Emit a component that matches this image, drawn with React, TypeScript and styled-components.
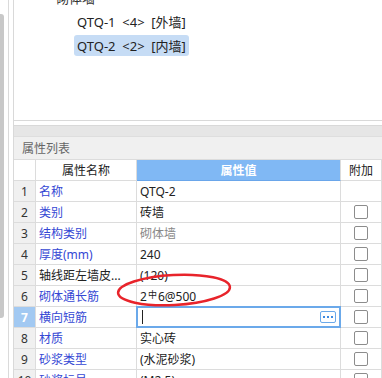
import React from 'react';
import styled, { createGlobalStyle } from 'styled-components';

const GlobalStyle = createGlobalStyle`
  html, body {
    margin: 0;
    padding: 0;
    background: #ffffff;
    overflow: hidden;
  }
  body {
    font-family: "Noto Sans", "Noto Sans CJK SC", sans-serif;
    color: #222;
  }
`;

const Page = styled.div`
  position: relative;
  display: flex;
  width: 382px;
  height: 378px;
  overflow: hidden;
  background: #fff;
`;

const ScrollTrack = styled.div`
  width: 8px;
  border-right: 1px solid #dadada;
  margin-right: 4px;
  padding-top: 14px;
  flex-shrink: 0;
`;

const ScrollThumb = styled.div`
  width: 4px;
  height: 304px;
  background: #c8c8c8;
  border-radius: 0 3px 3px 0;
`;

const Main = styled.div`
  flex: 1;
  display: flex;
  flex-direction: column;
  border-left: 1px solid #d9d9d9;
  min-width: 0;
`;

const TreePanel = styled.div`
  flex-shrink: 0;
  height: 121px;
  box-sizing: border-box;
  border-bottom: 1px solid #d9d9d9;
  overflow: hidden;
  font-size: 13px;
`;

const TreeList = styled.div`
  display: flex;
  flex-direction: column;
  margin-top: -13px;
  gap: 3px;
`;

const TreeRoot = styled.div`
  display: flex;
  align-items: center;
  height: 21px;
  padding-left: 34px;
  color: #333;
  gap: 5px;
`;

const Dot = styled.span`
  width: 3px;
  height: 3px;
  background: #888;
  border-radius: 50%;
`;

const TreeItem = styled.div<{ $selected?: boolean }>`
  align-self: flex-start;
  display: flex;
  align-items: center;
  height: 21px;
  margin-left: 60px;
  padding: 0 3px;
  border-radius: 3px;
  color: #222;
  white-space: pre;
  background: ${(p) => (p.$selected ? '#c6dcf5' : 'transparent')};
`;

const Gap = styled.div`
  flex-shrink: 0;
  height: 4px;
`;

const PropPanel = styled.div`
  flex-shrink: 0;
  display: flex;
  flex-direction: column;
  border-top: 1px solid #d9d9d9;
`;

const PanelBar = styled.div`
  flex-shrink: 0;
  height: 10px;
  background: #e6e6e6;
  border-bottom: 1px solid #dedede;
`;

const PanelTitle = styled.div`
  flex-shrink: 0;
  height: 22px;
  display: flex;
  align-items: center;
  padding-left: 8px;
  background: #f0f0f0;
  color: #666;
  font-size: 12px;
`;

const Grid = styled.div`
  flex-shrink: 0;
  border-top: 1px solid #dcdcdc;
  font-size: 12px;
`;

const Row = styled.div`
  display: grid;
  grid-template-columns: 22px 101px 204px 41px;
  height: 21px;
`;

const Cell = styled.div<{ $align?: string; $color?: string; $bg?: string }>`
  position: relative;
  box-sizing: border-box;
  display: flex;
  align-items: center;
  justify-content: ${(p) => p.$align || 'flex-start'};
  padding-left: ${(p) => (p.$align ? '0' : '3px')};
  border-right: 1px solid #dcdcdc;
  border-bottom: 1px solid #dcdcdc;
  background: ${(p) => p.$bg || '#fff'};
  color: ${(p) => p.$color || '#222'};
  white-space: nowrap;
  overflow: hidden;
`;

const NumCell = styled(Cell)<{ $active?: boolean }>`
  background: ${(p) => (p.$active ? '#a2c9f2' : '#f0f0f0')};
  color: ${(p) => (p.$active ? '#fff' : '#333')};
  font-weight: ${(p) => (p.$active ? 700 : 400)};
`;

const HeadValue = styled(Cell)`
  background: #80b8f4;
  color: #fff;
  font-weight: 700;
  border-bottom: 1px solid #6aa6ea;
`;

const EditCell = styled(Cell)`
  border: 2px solid #6ba9ea;
  margin: -1px 0 0 -1px;
  padding-left: 4px;
  justify-content: space-between;
  padding-right: 3px;
`;

const Caret = styled.span`
  width: 1px;
  height: 14px;
  background: #222;
`;

const MoreButton = styled.span`
  display: flex;
  align-items: center;
  justify-content: center;
  gap: 2px;
  width: 14px;
  height: 10px;
  border: 1px solid #6ba9ea;
  border-radius: 2px;
`;

const MoreDot = styled.span`
  width: 2px;
  height: 2px;
  background: #3f8ae0;
`;

const Box = styled.span`
  width: 12px;
  height: 12px;
  border: 1px solid #8c8c8c;
  border-radius: 2px;
  background: #fff;
`;

const Small = styled.span`
  font-size: 9px;
  position: relative;
  top: -2px;
  margin: 0 1px;
`;

const Annotation = styled.svg`
  position: absolute;
  left: 110px;
  top: 266px;
  pointer-events: none;
`;

const BLUE = '#3447d4';

type Prop = { name: string; value: React.ReactNode; nameColor?: string; valueColor?: string; box?: boolean; edit?: boolean };

const props: Prop[] = [
  { name: '名称', value: 'QTQ-2', box: false },
  { name: '类别', value: '砖墙' },
  { name: '结构类别', value: '砌体墙', valueColor: '#888' },
  { name: '厚度(mm)', value: '240' },
  { name: '轴线距左墙皮...', value: '(120)', nameColor: '#222' },
  { name: '砌体通长筋', value: <>2<Small>中</Small>6@500</> },
  { name: '横向短筋', value: '', edit: true },
  { name: '材质', value: '实心砖' },
  { name: '砂浆类型', value: '(水泥砂浆)' },
  { name: '砂浆标号', value: '(M2.5)' },
];

export default function App() {
  return (
    <Page>
      <GlobalStyle />
      <ScrollTrack>
        <ScrollThumb />
      </ScrollTrack>
      <Main>
        <TreePanel>
          <TreeList>
            <TreeRoot>
              <Dot />
              砌体墙
            </TreeRoot>
            <TreeItem>{'QTQ-1  <4>  [外墙]'}</TreeItem>
            <TreeItem $selected>{'QTQ-2  <2>  [内墙]'}</TreeItem>
          </TreeList>
        </TreePanel>
        <Gap />
        <PropPanel>
          <PanelBar />
          <PanelTitle>属性列表</PanelTitle>
          <Grid>
            <Row>
              <Cell $bg="#fff" />
              <Cell $align="center">属性名称</Cell>
              <HeadValue $align="center">属性值</HeadValue>
              <Cell $align="center">附加</Cell>
            </Row>
            {props.map((p, i) => (
              <Row key={p.name}>
                <NumCell $align="center" $active={p.edit}>{i + 1}</NumCell>
                <Cell $color={p.nameColor || BLUE}>{p.name}</Cell>
                {p.edit ? (
                  <EditCell>
                    <Caret />
                    <MoreButton>
                      <MoreDot />
                      <MoreDot />
                      <MoreDot />
                    </MoreButton>
                  </EditCell>
                ) : (
                  <Cell $color={p.valueColor}>{p.value}</Cell>
                )}
                <Cell $align="center">{p.box === false ? null : <Box />}</Cell>
              </Row>
            ))}
          </Grid>
        </PropPanel>
      </Main>
      <Annotation width="128" height="48" viewBox="0 0 128 48">
        <ellipse cx="64" cy="24" rx="56" ry="15" fill="none" stroke="#e8242b" strokeWidth="2.5" transform="rotate(-3 64 24)" />
      </Annotation>
    </Page>
  );
}
